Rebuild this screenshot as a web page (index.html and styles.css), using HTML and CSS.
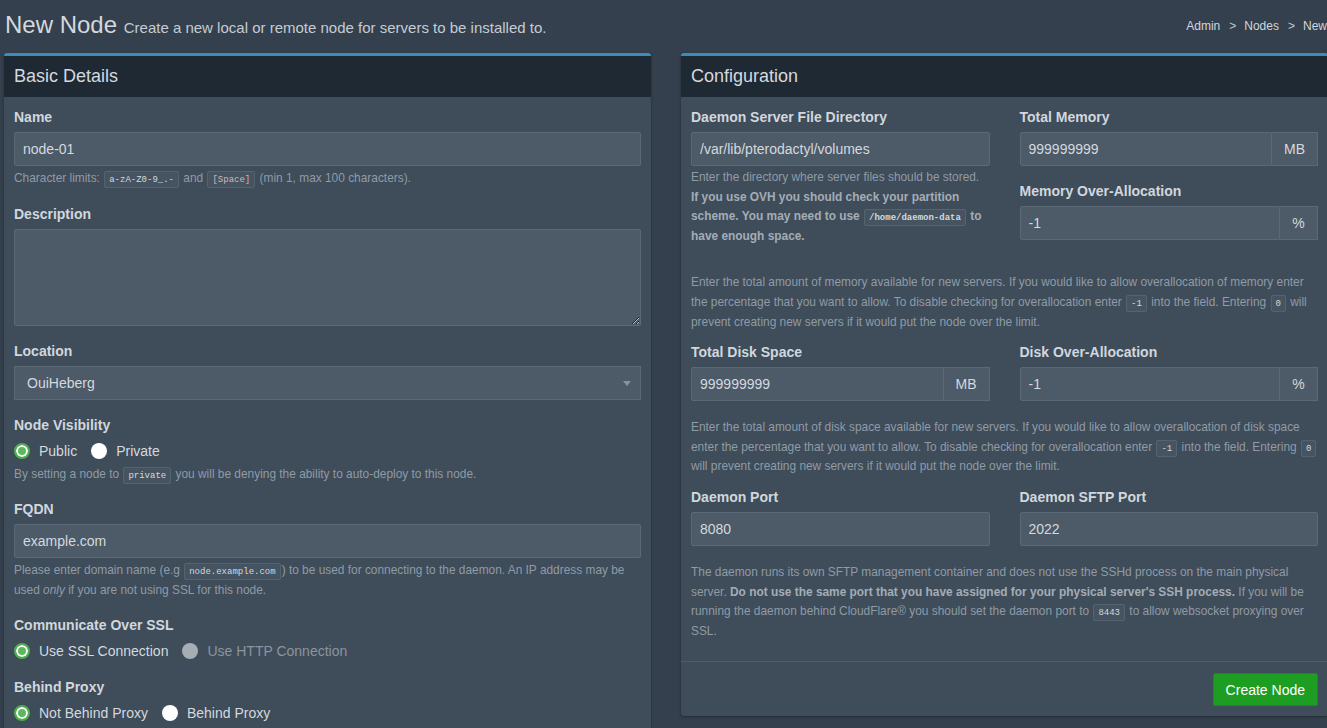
FILE: index.html
```html
<!DOCTYPE html>
<html lang="en">
<head>
	<meta charset="UTF-8">
	<meta name="viewport" content="width=device-width, initial-scale=1.0">
	<title>New Node</title>
	<link rel="stylesheet" href="styles.css">
</head>
<body>
	<div class="wrapper">
		<section class="content-header">
			<h1>New Node <small>Create a new local or remote node for servers to be installed to.</small></h1>
			<ol class="breadcrumb">
				<li>Admin</li>
				<li>Nodes</li>
				<li>New Node</li>
			</ol>
		</section>

		<section class="content">
			<!-- 左边：基本信息 -->
			<div class="box">
				<div class="box-header"><h3>Basic Details</h3></div>
				<div class="box-body">
					<div class="form-group">
						<label>Name</label>
						<input class="form-control" type="text" value="node-01">
						<p class="help">Character limits: <code>a-zA-Z0-9_.-</code> and <code class="pink">[Space]</code> (min 1, max 100 characters).</p>
					</div>
					<div class="form-group">
						<label>Description</label>
						<textarea class="form-control textarea"></textarea>
					</div>
					<div class="form-group">
						<label>Location</label>
						<div class="select">OuiHeberg<span class="caret"></span></div>
					</div>
					<div class="form-group">
						<label>Node Visibility</label>
						<div class="radios">
							<span class="radio checked"></span><span class="radio-text">Public</span>
							<span class="radio"></span><span class="radio-text">Private</span>
						</div>
						<p class="help">By setting a node to <code>private</code> you will be denying the ability to auto-deploy to this node.</p>
					</div>
					<div class="form-group">
						<label>FQDN</label>
						<input class="form-control" type="text" value="example.com">
						<p class="help">Please enter domain name (e.g <code>node.example.com</code>) to be used for connecting to the daemon. An IP address may be used <em>only</em> if you are not using SSL for this node.</p>
					</div>
					<div class="form-group">
						<label>Communicate Over SSL</label>
						<div class="radios">
							<span class="radio checked"></span><span class="radio-text">Use SSL Connection</span>
							<span class="radio disabled"></span><span class="radio-text muted">Use HTTP Connection</span>
						</div>
					</div>
					<div class="form-group">
						<label>Behind Proxy</label>
						<div class="radios">
							<span class="radio checked"></span><span class="radio-text">Not Behind Proxy</span>
							<span class="radio"></span><span class="radio-text">Behind Proxy</span>
						</div>
						<p class="help">If you are running the daemon behind a proxy such as Cloudflare, select this to have the daemon skip looking for certificates on boot.</p>
					</div>
				</div>
			</div>

			<!-- 右边：配置 -->
			<div class="box">
				<div class="box-header"><h3>Configuration</h3></div>
				<div class="box-body">
					<div class="row">
						<div class="form-group">
							<label>Daemon Server File Directory</label>
							<input class="form-control" type="text" value="/var/lib/pterodactyl/volumes">
							<p class="help spaced">Enter the directory where server files should be stored. <strong>If you use OVH you should check your partition scheme. You may need to use <code>/home/daemon-data</code> to have enough space.</strong></p>
						</div>
						<div>
							<div class="form-group">
								<label>Total Memory</label>
								<div class="input-group">
									<input class="form-control" type="text" value="999999999">
									<span class="addon">MB</span>
								</div>
							</div>
							<div class="form-group">
								<label>Memory Over-Allocation</label>
								<div class="input-group">
									<input class="form-control" type="text" value="-1">
									<span class="addon narrow">%</span>
								</div>
							</div>
						</div>
					</div>
					<p class="help wide">Enter the total amount of memory available for new servers. If you would like to allow overallocation of memory enter the percentage that you want to allow. To disable checking for overallocation enter <code>-1</code> into the field. Entering <code>0</code> will prevent creating new servers if it would put the node over the limit.</p>

					<div class="row">
						<div class="form-group">
							<label>Total Disk Space</label>
							<div class="input-group">
								<input class="form-control" type="text" value="999999999">
								<span class="addon">MB</span>
							</div>
						</div>
						<div class="form-group">
							<label>Disk Over-Allocation</label>
							<div class="input-group">
								<input class="form-control" type="text" value="-1">
								<span class="addon narrow">%</span>
							</div>
						</div>
					</div>
					<p class="help wide">Enter the total amount of disk space available for new servers. If you would like to allow overallocation of disk space enter the percentage that you want to allow. To disable checking for overallocation enter <code>-1</code> into the field. Entering <code>0</code> will prevent creating new servers if it would put the node over the limit.</p>

					<div class="row">
						<div class="form-group">
							<label>Daemon Port</label>
							<input class="form-control" type="text" value="8080">
						</div>
						<div class="form-group">
							<label>Daemon SFTP Port</label>
							<input class="form-control" type="text" value="2022">
						</div>
					</div>
					<p class="help wide">The daemon runs its own SFTP management container and does not use the SSHd process on the main physical server. <strong>Do not use the same port that you have assigned for your physical server's SSH process.</strong> If you will be running the daemon behind CloudFlare&reg; you should set the daemon port to <code>8443</code> to allow websocket proxying over SSL.</p>
				</div>
				<div class="box-footer">
					<button class="btn">Create Node</button>
				</div>
			</div>
		</section>
	</div>
</body>
</html>
```

FILE: styles.css
```css
body {
    margin: 0;
    background-color: #34404d;
    font-family: "Liberation Sans", Arial, sans-serif;
    font-size: 14px;
    color: #cad1d8;
    overflow: hidden;
}
.wrapper {
    width: 1359px; /* 比窗口宽一点，面包屑被裁掉 */
}
.content-header {
    display: flex;
    justify-content: space-between;
    align-items: center;
    padding: 7px 0 0 5px;
    height: 35px;
}
.content-header h1 {
    margin: 0;
    font-size: 24px;
    font-weight: normal;
    color: #d3d9df;
}
.content-header small {
    font-size: 15px;
    color: #c4ccd4;
}
.breadcrumb {
    display: flex;
    list-style: none;
    margin: 2px 0 0;
    padding: 0;
    font-size: 12px;
    color: #d0d6dc;
}
.breadcrumb li + li::before {
    content: ">";
    padding: 0 8px 0 9px;
    color: #c0c8d0;
}
.content {
    display: grid;
    grid-template-columns: 647px 647px;
    column-gap: 30px;
    align-items: start;
    padding: 11px 0 0 4px;
}
.box {
    border-top: 3px solid #3c8dbc;
    border-radius: 3px;
    background-color: #3f4c59;
    box-shadow: 0 1px 3px rgba(0, 0, 0, 0.35);
}
.box-header {
    background-color: #1f2933;
    padding: 0 10px;
    height: 41px;
    display: flex;
    align-items: center;
}
.box-header h3 {
    margin: 0;
    font-size: 18px;
    font-weight: normal;
    color: #d3d9df;
}
.box-body {
    padding: 10px 10px 10px;
}
.form-group {
    margin-bottom: 15px;
}
label {
    display: block;
    font-weight: bold;
    line-height: 20px;
    margin-bottom: 5px;
    color: #d0d7de;
}
.form-control {
    display: block;
    box-sizing: border-box;
    width: 100%;
    height: 34px;
    padding: 0 8px;
    background-color: #4d5a68;
    border: 1px solid #5b6977;
    border-radius: 2px;
    color: #d3d9df;
    font-family: inherit;
    font-size: 14px;
    outline: none;
}
.textarea {
    height: 97px;
    resize: vertical;
}
.select {
    position: relative;
    box-sizing: border-box;
    height: 34px;
    line-height: 32px;
    padding-left: 12px;
    background-color: #4d5a68;
    border: 1px solid #5b6977;
    color: #d3d9df;
}
.caret { /* 下拉小三角 */
    position: absolute;
    right: 9px;
    top: 14px;
    border-left: 4px solid transparent;
    border-right: 4px solid transparent;
    border-top: 5px solid #8793a0;
}
.help {
    margin: 3px 0 0;
    font-size: 11.9px;
    line-height: 19.6px;
    color: #8f9ba7;
}
.help strong {
    color: #a3adb7;
}
.help.spaced {
    margin: 2px 0 10px;
}
.help.wide {
    margin: 2px 0 10px;
}
code {
    font-family: "Liberation Mono", monospace;
    font-size: 9px;
    line-height: 1;
    padding: 3px 4px 2px;
    margin: 0 1px;
    background-color: #465360;
    border: 1px solid #55626f;
    border-radius: 2px;
    color: #d3d9df;
}
code.pink {
    color: #d2b6bb;
}
.radios {
    display: flex;
    align-items: center;
    height: 22px;
}
.radio {
    box-sizing: border-box;
    width: 16px;
    height: 16px;
    border-radius: 50%;
    background-color: #fff;
    flex: none;
}
.radio.checked {
    background-color: #5cb85c;
    border: 2px solid #4fae4f;
    box-shadow: inset 0 0 0 2px #fff;
}
.radio.disabled {
    background-color: #a6adb3;
}
.radio-text {
    margin: 0 14px 0 9px;
    color: #d3d9df;
}
.radio-text.muted {
    color: #8b959f;
}
.row {
    display: grid;
    grid-template-columns: 1fr 1fr;
    column-gap: 30px;
}
.input-group {
    display: flex;
}
.input-group .form-control {
    border-radius: 2px 0 0 2px;
}
.addon {
    box-sizing: border-box;
    flex: none;
    width: 46px;
    height: 34px;
    line-height: 32px;
    text-align: center;
    background-color: #4d5a68;
    border: 1px solid #5b6977;
    border-left: none;
    color: #d3d9df;
}
.addon.narrow {
    width: 38px;
}
.box-footer {
    border-top: 1px solid #4e5b68;
    padding: 11px 10px 10px;
    display: flex;
    justify-content: flex-end;
}
.btn {
    height: 33px;
    padding: 0 12px;
    background-color: #1d9e22;
    border: 1px solid #188c1c;
    border-radius: 2px;
    color: #fff;
    font-family: inherit;
    font-size: 14px;
    cursor: pointer;
}
```
